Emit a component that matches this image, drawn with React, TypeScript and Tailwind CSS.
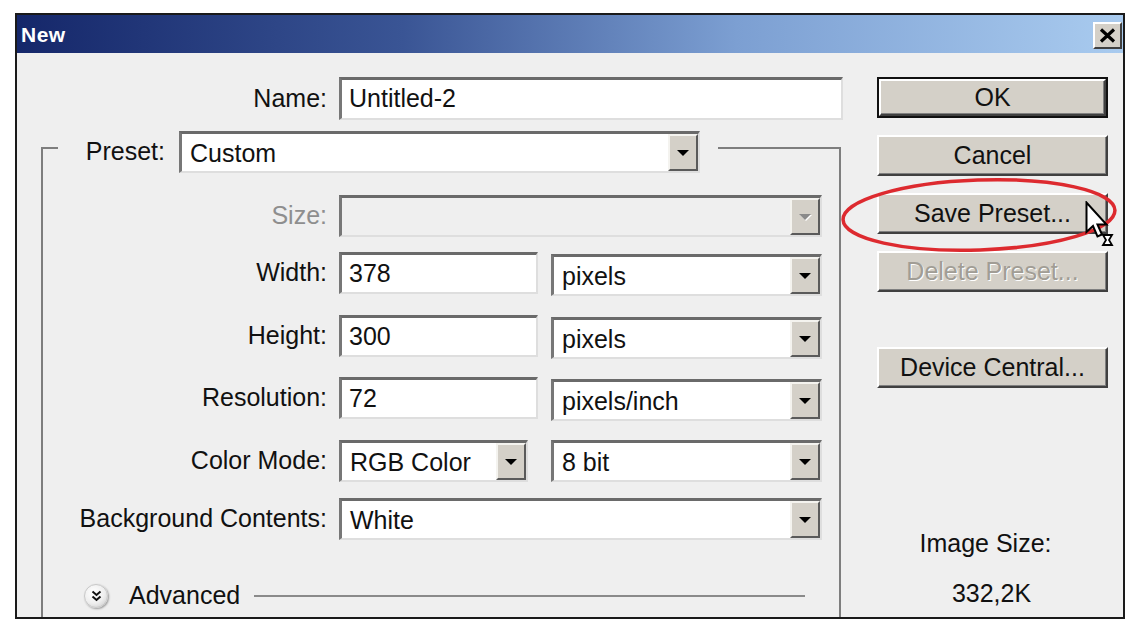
import React from "react";

const F = "font-['Liberation_Sans',Arial,sans-serif]";

function Arrow({ disabled }: { disabled?: boolean }) {
  return (
    <svg width="14" height="8" viewBox="0 0 14 8">
      {disabled ? (
        <>
          <polygon points="2,2 14,2 8,8" fill="#ffffff" />
          <polygon points="1,1 13,1 7,7" fill="#8a8a8a" />
        </>
      ) : (
        <polygon points="1,1 13,1 7,7" fill="#000000" />
      )}
    </svg>
  );
}

function DropBtn({ disabled }: { disabled?: boolean }) {
  return (
    <div className="w-[30px] h-full bg-[#d4d0c8] border-2 border-t-[#f4f3ef] border-l-[#f4f3ef] border-b-[#5a5a5a] border-r-[#5a5a5a] flex items-center justify-center">
      <Arrow disabled={disabled} />
    </div>
  );
}

function Select({
  value,
  w,
  disabled,
  extra = "",
}: {
  value?: string;
  w: string;
  disabled?: boolean;
  extra?: string;
}) {
  return (
    <div
      className={`flex h-[42px] ${w} ${extra} border-t-[3px] border-l-[3px] border-t-[#6a6a6a] border-l-[#777777] border-b-2 border-r-2 border-b-[#dedede] border-r-[#dedede] ${
        disabled ? "bg-[#efefef]" : "bg-white"
      }`}
    >
      <div className="flex-1 flex items-center pl-[8px] pt-[2px] text-[25px] text-[#111]">{value}</div>
      <DropBtn disabled={disabled} />
    </div>
  );
}

function Input({ value, w }: { value: string; w: string }) {
  return (
    <div
      className={`flex items-center h-[42px] ${w} bg-white border-t-[3px] border-l-[3px] border-t-[#6a6a6a] border-l-[#777777] border-b-2 border-r-2 border-b-[#dedede] border-r-[#dedede] pl-[7px] text-[25px] text-[#111]`}
    >
      {value}
    </div>
  );
}

function Btn({
  label,
  def,
  disabled,
  extra = "",
}: {
  label: string;
  def?: boolean;
  disabled?: boolean;
  extra?: string;
}) {
  const inner = (
    <div className="h-full w-full bg-[#d4d0c8] border-2 border-t-[#ffffff] border-l-[#ffffff] border-b-[#404040] border-r-[#404040] shadow-[inset_-1px_-1px_0_#808080] flex items-center justify-center text-[25px]">
      <span
        className={
          disabled
            ? "text-[#a19d95] [text-shadow:1px_1px_0_#ffffff]"
            : "text-[#111]"
        }
      >
        {label}
      </span>
    </div>
  );
  return (
    <div className={`h-[41px] w-[231px] ${extra} ${def ? "border-2 border-[#111] " : ""}`}>
      {inner}
    </div>
  );
}

function Row({
  label,
  gray,
  mt,
  children,
}: {
  label: string;
  gray?: boolean;
  mt: string;
  children: React.ReactNode;
}) {
  return (
    <div className={`flex items-start ${mt}`}>
      <div
        className={`w-[284px] h-[42px] flex items-center justify-end text-[25px] ${
          gray ? "text-[#8e8e8e]" : "text-[#111]"
        }`}
      >
        {label}
      </div>
      <div className="ml-[12px] flex items-start">{children}</div>
    </div>
  );
}

export default function App() {
  return (
    <div className={`${F} w-[1138px] h-[642px] bg-white overflow-hidden pt-[13px] pl-[15px]`}>
      <div className="relative w-[1110px] h-[606px] border-2 border-[#1a1a1a] bg-[#efefef] flex flex-col overflow-hidden">
        {/* title bar */}
        <div className="h-[38px] shrink-0 bg-[linear-gradient(to_right,#15276a,#3a5595_35%,#7c9fd2_65%,#a9cbef)] flex items-center justify-between pl-[4px] pr-[1px]">
          <span className="text-white font-bold text-[21px] tracking-[0.5px] mt-[1px]">New</span>
          <div className="w-[29px] h-[27px] mt-[2px] bg-[#d4d0c8] border-2 border-t-[#ffffff] border-l-[#ffffff] border-b-[#404040] border-r-[#404040] flex items-center justify-center">
            <svg width="17" height="15" viewBox="0 0 17 15">
              <path d="M2 1.5 L15 13.5 M15 1.5 L2 13.5" stroke="#000" strokeWidth="3.2" />
            </svg>
          </div>
        </div>

        {/* content */}
        <div className="flex-1 flex">
          {/* left */}
          <div className="w-[850px] shrink-0 flex flex-col pt-[24px]">
            <div className="flex items-start">
              <div className="w-[310px] h-[43px] flex items-center justify-end text-[25px] text-[#111]">
                Name:
              </div>
              <div className="ml-[12px]">
                <div className="flex items-center h-[43px] w-[504px] bg-white border-t-[3px] border-l-[3px] border-t-[#6a6a6a] border-l-[#777777] border-b-2 border-r-2 border-b-[#dedede] border-r-[#dedede] pl-[7px] text-[25px] text-[#111]">
                  Untitled-2
                </div>
              </div>
            </div>

            {/* fieldset */}
            <div className="ml-[24px] mt-[27px] w-[800px] flex-1 border-t-2 border-l-2 border-r-2 border-[#7e7e7e] flex flex-col">
              <div className="flex -mt-[18px]">
                <div className="w-[15px]" />
                <div className="bg-[#efefef] w-[660px] flex items-center justify-end pr-[18px]">
                  <span className="text-[25px] text-[#111]">Preset:</span>
                  <Select value="Custom" w="w-[521px]" extra="ml-[14px]" />
                </div>
              </div>

              <Row label="Size:" gray mt="mt-[22px]">
                <Select w="w-[483px]" disabled />
              </Row>
              <Row label="Width:" mt="mt-[15px]">
                <Input value="378" w="w-[199px]" />
                <Select value="pixels" w="w-[271px]" extra="ml-[13px] mt-[2px]" />
              </Row>
              <Row label="Height:" mt="mt-[19px]">
                <Input value="300" w="w-[199px]" />
                <Select value="pixels" w="w-[271px]" extra="ml-[13px] mt-[2px]" />
              </Row>
              <Row label="Resolution:" mt="mt-[18px]">
                <Input value="72" w="w-[199px]" />
                <Select value="pixels/inch" w="w-[271px]" extra="ml-[13px] mt-[2px]" />
              </Row>
              <Row label="Color Mode:" mt="mt-[19px]">
                <Select value="RGB Color" w="w-[189px]" />
                <Select value="8 bit" w="w-[271px]" extra="ml-[23px]" />
              </Row>
              <Row label="Background Contents:" mt="mt-[16px]">
                <Select value="White" w="w-[483px]" />
              </Row>

              <div className="flex items-center mt-[41px] h-[30px] pl-[41px] pr-[34px]">
                <div className="shrink-0 w-[24px] h-[24px] rounded-full border border-[#c8c8c8] bg-[radial-gradient(circle_at_40%_35%,#ffffff,#eeeeee_55%,#c4c4c4)] shadow-[1px_1px_2px_#9a9a9a] flex items-center justify-center">
                  <svg width="11" height="12" viewBox="0 0 11 12">
                    <path d="M1.5 1.5 L5.5 5 L9.5 1.5 M1.5 6.5 L5.5 10 L9.5 6.5" stroke="#111" strokeWidth="2" fill="none" />
                  </svg>
                </div>
                <span className="ml-[21px] text-[25px] text-[#111]">Advanced</span>
                <div className="ml-[14px] flex-1 h-[2px] bg-[#8a8a8a]" />
              </div>
            </div>
          </div>

          {/* right */}
          <div className="flex flex-col pl-[10px] pt-[24px]">
            <Btn label="OK" def />
            <Btn label="Cancel" extra="mt-[17px]" />
            <Btn label="Save Preset..." extra="mt-[17px]" />
            <Btn label="Delete Preset..." disabled extra="mt-[17px]" />
            <Btn label="Device Central..." extra="mt-[55px]" />
            <div className="w-[231px] text-center text-[25px] text-[#111] mt-[140px] h-[30px] leading-[30px] pr-[14px]">
              Image Size:
            </div>
            <div className="w-[231px] text-center text-[25px] text-[#111] mt-[20px] h-[30px] leading-[30px] pr-[2px]">
              332,2K
            </div>
          </div>
        </div>

        {/* red ellipse annotation */}
        <svg
          className="absolute left-[821px] top-[160px] pointer-events-none"
          width="282"
          height="80"
          viewBox="0 0 282 80"
        >
          <ellipse cx="141" cy="40" rx="136" ry="35" fill="none" stroke="#dd2a2f" strokeWidth="3.5" transform="rotate(-2 141 40)" />
        </svg>

        {/* mouse cursor */}
        <svg
          className="absolute left-[1068px] top-[186px] pointer-events-none"
          width="30"
          height="46"
          viewBox="0 0 30 46"
        >
          <path
            d="M1.5 1.5 L1.5 31 L8 25 L12.5 35.5 L17 33.5 L12.5 23.5 L21.5 23.5 Z"
            fill="#ffffff"
            stroke="#000"
            strokeWidth="2"
            strokeLinejoin="miter"
          />
          <path d="M18 34 L27 34 L24 39 L27 44 L18 44 L21 39 Z" fill="#ffffff" stroke="#000" strokeWidth="1.8" />
        </svg>
      </div>
    </div>
  );
}
